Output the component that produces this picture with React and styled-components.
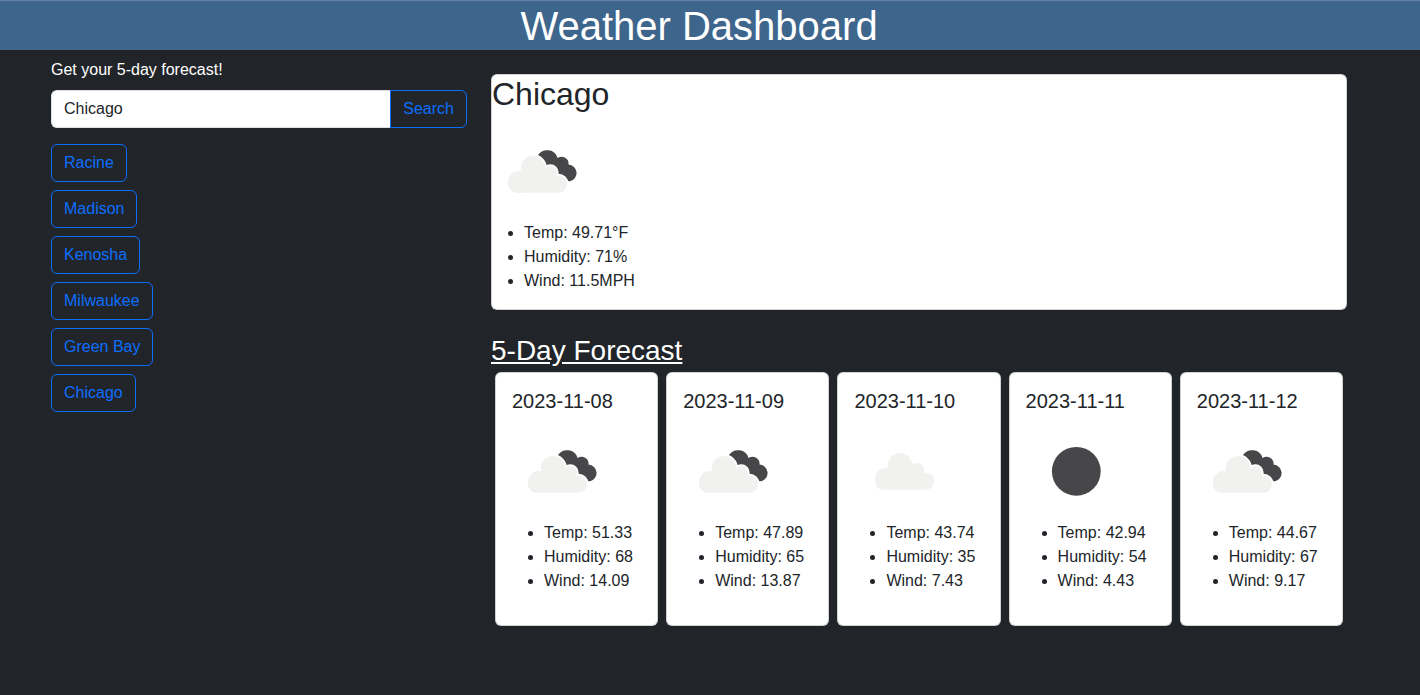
import React from "react";
import styled, { createGlobalStyle } from "styled-components";

const Global = createGlobalStyle`
  * { box-sizing: border-box; }
  html, body { margin: 0; height: 100%; background: #212529; overflow: hidden; }
  body { font-family: "Liberation Sans", Arial, sans-serif; font-size: 16px; line-height: 1.5; color: #212529; }
`;

const Header = styled.header`
  height: 50px;
  background: #3e658c;
  border-top: 1px solid #6480a3;
  padding-right: 22px;
  text-align: center;
`;
const Title = styled.h1`
  margin: 0;
  font-size: 40px;
  font-weight: 400;
  line-height: 49px;
  padding-top: 1px;
  color: #fff;
`;
const Layout = styled.div`
  display: flex;
  gap: 24px;
  padding-left: 51px;
`;
const Sidebar = styled.aside`
  width: 416px;
  padding-top: 8px;
`;
const Lead = styled.p`
  margin: 0 0 8px;
  color: #fff;
`;
const SearchGroup = styled.form`
  display: flex;
  height: 38px;
  margin-bottom: 16px;
`;
const SearchInput = styled.input`
  flex: 1;
  min-width: 0;
  padding: 6px 12px;
  font: inherit;
  color: #212529;
  background: #fff;
  border: 1px solid #dee2e6;
  border-right: 0;
  border-radius: 6px 0 0 6px;
  outline: none;
`;
const OutlineButton = styled.button`
  display: block;
  height: 38px;
  padding: 6px 12px;
  font: inherit;
  color: #0d6efd;
  background: transparent;
  border: 1px solid #0d6efd;
  border-radius: 6px;
`;
const SearchButton = styled(OutlineButton)`
  border-radius: 0 6px 6px 0;
`;
const CityList = styled.div`
  display: flex;
  flex-direction: column;
  align-items: flex-start;
  gap: 8px;
`;
const Content = styled.main`
  width: 856px;
  padding-top: 24px;
`;
const CurrentCard = styled.section`
  height: 236px;
  background: #fff;
  border: 1px solid rgba(0, 0, 0, 0.175);
  border-radius: 6px;
`;
const CityName = styled.h2`
  margin: 0;
  font-size: 32px;
  font-weight: 400;
  line-height: 38.4px;
`;
const Stats = styled.ul`
  margin: 0 0 16px;
  padding: 1px 0 0 32px;
`;
const DayStats = styled(Stats)`
  padding-top: 2px;
`;
const ForecastHeading = styled.h3`
  margin: 24px 0 4px;
  font-size: 28px;
  font-weight: 400;
  line-height: 33.6px;
  color: #fff;
  text-decoration: underline;
`;
const ForecastRow = styled.div`
  display: flex;
  gap: 8px;
  padding: 0 4px;
`;
const DayCard = styled.article`
  flex: 1;
  height: 254px;
  padding: 16px;
  background: #fff;
  border: 1px solid rgba(0, 0, 0, 0.175);
  border-radius: 6px;
`;
const DayTitle = styled.h5`
  margin: 0;
  font-size: 20px;
  font-weight: 400;
  line-height: 24px;
`;
const IconSvg = styled.svg`
  display: block;
  width: 100px;
  height: 100px;
  margin-bottom: 6.4px;
`;

const CloudShape = ({ x, y, stroke }) => (
  <g transform={`translate(${x} ${y})`} fill="#f1f1f0" stroke={stroke ? "#fff" : "none"} strokeWidth={stroke ? 3.4 : 0}>
    <circle cx="25" cy="12.3" r="12.3" />
    <circle cx="42.3" cy="16.7" r="6.7" />
    <circle cx="10.8" cy="25.9" r="10.8" />
    <rect x="0" y="19.4" width="59" height="17.3" rx="8.65" />
  </g>
);

const WeatherIcon = ({ kind }) => (
  <IconSvg viewBox="0 0 100 100">
    {kind === "sun" && <circle cx="50.3" cy="58.3" r="24.4" fill="#474749" />}
    {kind === "cloud" && <CloudShape x={21} y={40} />}
    {kind === "broken" && (
      <>
        <path
          fill="#474749"
          d="M46 42 A11 11 0 0 1 65.6 45 A7 7 0 0 1 76.5 51.6 A8.4 8.4 0 0 1 78 68.2 Q72 68.4 68 63 L60 60 L50 56 Z"
        />
        <CloudShape x={16} y={43} stroke />
        <CloudShape x={16} y={43} />
      </>
    )}
  </IconSvg>
);

const cities = ["Racine", "Madison", "Kenosha", "Milwaukee", "Green Bay", "Chicago"];
const days = [
  { date: "2023-11-08", icon: "broken", temp: "51.33", humidity: "68", wind: "14.09" },
  { date: "2023-11-09", icon: "broken", temp: "47.89", humidity: "65", wind: "13.87" },
  { date: "2023-11-10", icon: "cloud", temp: "43.74", humidity: "35", wind: "7.43" },
  { date: "2023-11-11", icon: "sun", temp: "42.94", humidity: "54", wind: "4.43" },
  { date: "2023-11-12", icon: "broken", temp: "44.67", humidity: "67", wind: "9.17" },
];

export default function App() {
  return (
    <>
      <Global />
      <Header>
        <Title>Weather Dashboard</Title>
      </Header>
      <Layout>
        <Sidebar>
          <Lead>Get your 5-day forecast!</Lead>
          <SearchGroup onSubmit={(e) => e.preventDefault()}>
            <SearchInput defaultValue="Chicago" />
            <SearchButton type="submit">Search</SearchButton>
          </SearchGroup>
          <CityList>
            {cities.map((c) => (
              <OutlineButton key={c} type="button">{c}</OutlineButton>
            ))}
          </CityList>
        </Sidebar>
        <Content>
          <CurrentCard>
            <CityName>Chicago</CityName>
            <WeatherIcon kind="broken" />
            <Stats>
              <li>Temp: 49.71°F</li>
              <li>Humidity: 71%</li>
              <li>Wind: 11.5MPH</li>
            </Stats>
          </CurrentCard>
          <ForecastHeading>5-Day Forecast</ForecastHeading>
          <ForecastRow>
            {days.map((d) => (
              <DayCard key={d.date}>
                <DayTitle>{d.date}</DayTitle>
                <WeatherIcon kind={d.icon} />
                <DayStats>
                  <li>Temp: {d.temp}</li>
                  <li>Humidity: {d.humidity}</li>
                  <li>Wind: {d.wind}</li>
                </DayStats>
              </DayCard>
            ))}
          </ForecastRow>
        </Content>
      </Layout>
    </>
  );
}
